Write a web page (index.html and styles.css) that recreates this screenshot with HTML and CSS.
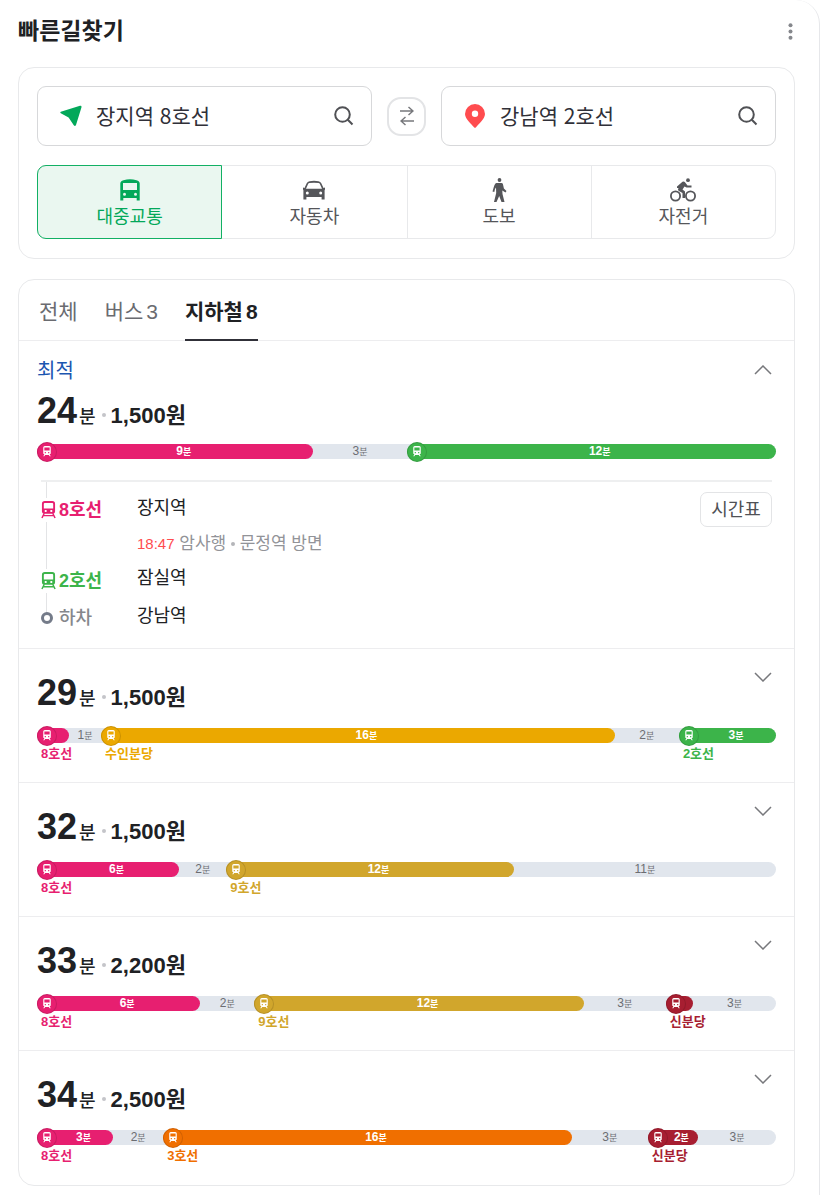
FILE: index.html
```html
<!DOCTYPE html>
<html lang="ko">
<head>
<meta charset="utf-8">
<meta name="viewport" content="width=device-width, initial-scale=1">
<title>빠른길찾기</title>
<link rel="stylesheet" href="styles.css">
</head>
<body>
<svg class="sprite" aria-hidden="true">
  <defs>
    <path id="train" fill-rule="evenodd" d="M3 0h6q2 0 2 2v7.500q0 1-1.500 1.500L11 13.500H9.500L8.500 12h-5L2.500 13.500H1L2.500 11Q1 10.500 1 9.500V2q0-2 2-2zM2.500 2v4h7V2zM3 8v1.500h1.500V8zM7.500 8v1.500H9V8z"/>
    <g id="rail"><path fill-rule="evenodd" d="M4 0h8q3 0 3 3v8q0 2-2 2.500H3Q1 13 1 11V3q0-3 3-3zM3 3Q3 2 4 2h8q1 0 1 1v5H3zM4 9.500v2h2v-2zM10 9.500v2h2v-2z"/><path d="M3.500 13 1 18M12.500 13 15 18M2.500 15.500h11" fill="none" stroke="currentColor" stroke-width="1.600"/></g>
  </defs>
  <symbol id="search" viewBox="0 0 20 20"><circle cx="8.500" cy="8.500" r="7.300"/><path d="m13.800 13.800 4.700 4.700"/></symbol>
  <symbol id="down" viewBox="0 0 18 10"><path d="m1 1 8 8 8-8"/></symbol>
  <symbol id="up" viewBox="0 0 18 10"><path d="m1 9 8-8 8 8"/></symbol>
</svg>
<main class="panel">
  <header class="panel-head">
    <h1 class="title">빠른길찾기</h1>
    <button class="more" type="button" aria-label="더보기"><svg width="5" height="17" viewBox="0 0 5 17"><circle cx="2.500" cy="2.300" r="2"/><circle cx="2.500" cy="8.500" r="2"/><circle cx="2.500" cy="14.700" r="2"/></svg></button>
  </header>

  <section class="card finder">
    <form class="places">
      <div class="place">
        <svg class="place-icon" viewBox="0 0 22 22"><path d="M.800 6.800 20 .800q1.800-.400 1.500 1.400L16 20q-.900 2-2.200.300L8.600 12.500.800 8.300Q-.400 7.400.800 6.800z" fill="#03a85a"/></svg>
        <input class="place-input" type="text" aria-label="출발지" value="장지역 8호선">
        <button class="search" type="button" aria-label="출발지 검색"><svg class="line-icon" width="20" height="20"><use href="#search"/></svg></button>
      </div>
      <button class="swap" type="button" aria-label="출발지 도착지 바꾸기"><svg width="14" height="20" viewBox="0 0 14 20"><path d="M0 5h13M8.500 1 13 5 8.500 9M14 15H1M5.500 11 1 15l4.500 4"/></svg></button>
      <div class="place">
        <svg class="place-icon" viewBox="0 0 22 24"><path fill-rule="evenodd" d="M11 0a10 10 0 0 1 10 10c0 5-6.500 10-9 13.300q-1 1-2 0C7.500 20 1 15 1 10A10 10 0 0 1 11 0zm0 6.500a3.200 3.200 0 1 0 0 6.400 3.200 3.200 0 0 0 0-6.400z" fill="#ff4c4f"/></svg>
        <input class="place-input" type="text" aria-label="도착지" value="강남역 2호선">
        <button class="search" type="button" aria-label="도착지 검색"><svg class="line-icon" width="20" height="20"><use href="#search"/></svg></button>
      </div>
    </form>
    <div class="modes">
      <button class="mode is-on" type="button"><svg width="26" height="24" viewBox="0 0 26 24"><path fill-rule="evenodd" d="M6.500 2.200Q13 .200 19.500 2.200 22.700 3 22.700 5.500V22.500h-3V20H6.300v2.500h-3V5.500Q3.300 3 6.500 2.200zM6 5v7h14V5zM7.500 14.800a1.500 1.500 0 1 0 0 3 1.500 1.500 0 0 0 0-3zm11 0a1.500 1.500 0 1 0 0 3 1.500 1.500 0 0 0 0-3z"/></svg>대중교통</button>
      <button class="mode" type="button"><svg width="26" height="24" viewBox="0 0 26 24"><path fill-rule="evenodd" d="M8.500 3.200Q13 2.500 17.500 3.200q2 .300 2.800 2L22.500 10l1.500-.500v2l-.400.700v9.300h-3V19H5.400v2.500h-3v-9.300L2 11.500v-2l1.500.5 2.200-4.800Q6.500 3.500 8.500 3.200zM8.500 5q-1 .100-1.400 1L5 10.700h16L18.900 6q-.400-.900-1.400-1Q13 4.500 8.500 5zM6.300 13.500a1.500 1.500 0 1 0 0 3 1.500 1.500 0 0 0 0-3zm13.400 0a1.500 1.500 0 1 0 0 3 1.500 1.500 0 0 0 0-3z"/></svg>자동차</button>
      <button class="mode" type="button"><svg width="26" height="24" viewBox="0 0 26 24"><circle cx="13.500" cy="2" r="1.900"/><path d="M10.500 5h5q1 0 1.400 1l1 4.500 2.600 2.500-1 1.500-3.200-2 .2 3.500L18.500 24h-3L13.200 18l-2.700 6H8l2.200-9L10 9.500l-1 1.500-.700 3-1.800-.500L7.800 9Q9 5 10.500 5z"/></svg>도보</button>
      <button class="mode" type="button"><svg width="26" height="24" viewBox="0 0 26 24"><g fill="none" stroke="currentColor" stroke-width="1.800"><circle cx="5.500" cy="18" r="4.600"/><circle cx="20.500" cy="18" r="4.600"/></g><circle cx="18" cy="2.200" r="1.900"/><path d="M12.500 3.800q1.500-.800 2.500.4L17.500 7.500h4v2h-5L14.500 8.500l-2 3 2.500 2V20h-2.500v-5l-4-2.300Q7.500 11.500 8.500 10H7V8.500z"/></svg>자전거</button>
    </div>
  </section>

  <section class="card results">
    <nav class="tabs">
      <a class="tab" href="#all">전체</a>
      <a class="tab" href="#bus">버스<span>3</span></a>
      <a class="tab is-on" href="#subway">지하철<span>8</span></a>
    </nav>

    <article class="route is-open">
      <button class="toggle" type="button" aria-label="접기"><svg class="line-icon thin" width="18" height="10"><use href="#up"/></svg></button>
      <p class="best">최적</p>
      <p class="summary"><strong class="mins">24</strong><span class="unit">분</span><i class="dot"></i><span class="fare">1,500원</span></p>
      <ol class="bar">
        <li class="seg pink" style="--w:276"><span class="track"><span class="fill">9<small>분</small></span></span><svg class="badge" viewBox="-6 -4 24 24"><use href="#train"/></svg></li>
        <li class="seg" style="--w:93"><span class="track">3<small>분</small></span></li>
        <li class="seg green" style="--w:369"><span class="track"><span class="fill">12<small>분</small></span></span><svg class="badge" viewBox="-6 -4 24 24"><use href="#train"/></svg></li>
      </ol>
      <div class="detail">
        <ol class="steps">
          <li class="step pink"><span class="line"><svg class="rail" viewBox="0 0 16 19"><use href="#rail"/></svg>8호선</span><span class="station">장지역</span></li>
          <li class="step note"><span class="info"><time class="time">18:47</time> 암사행 <i class="mini-dot"></i> 문정역 방면</span></li>
          <li class="step green"><span class="line"><svg class="rail" viewBox="0 0 16 19"><use href="#rail"/></svg>2호선</span><span class="station">잠실역</span></li>
          <li class="step last"><span class="line off"><i class="ring"></i>하차</span><span class="station">강남역</span></li>
        </ol>
        <button class="timetable" type="button">시간표</button>
      </div>
    </article>

    <article class="route">
      <button class="toggle" type="button" aria-label="펼치기"><svg class="line-icon thin" width="18" height="10"><use href="#down"/></svg></button>
      <p class="summary"><strong class="mins">29</strong><span class="unit">분</span><i class="dot"></i><span class="fare">1,500원</span></p>
      <ol class="bar">
        <li class="seg pink" style="--w:32"><span class="track"><span class="fill"></span></span><span class="name">8호선</span><svg class="badge" viewBox="-6 -4 24 24"><use href="#train"/></svg></li>
        <li class="seg" style="--w:32"><span class="track">1<small>분</small></span></li>
        <li class="seg yellow" style="--w:513"><span class="track"><span class="fill">16<small>분</small></span></span><span class="name">수인분당</span><svg class="badge" viewBox="-6 -4 24 24"><use href="#train"/></svg></li>
        <li class="seg" style="--w:64"><span class="track">2<small>분</small></span></li>
        <li class="seg green" style="--w:97"><span class="track"><span class="fill">3<small>분</small></span></span><span class="name">2호선</span><svg class="badge" viewBox="-6 -4 24 24"><use href="#train"/></svg></li>
      </ol>
    </article>

    <article class="route">
      <button class="toggle" type="button" aria-label="펼치기"><svg class="line-icon thin" width="18" height="10"><use href="#down"/></svg></button>
      <p class="summary"><strong class="mins">32</strong><span class="unit">분</span><i class="dot"></i><span class="fare">1,500원</span></p>
      <ol class="bar">
        <li class="seg pink" style="--w:142"><span class="track"><span class="fill">6<small>분</small></span></span><span class="name">8호선</span><svg class="badge" viewBox="-6 -4 24 24"><use href="#train"/></svg></li>
        <li class="seg" style="--w:47"><span class="track">2<small>분</small></span></li>
        <li class="seg gold" style="--w:287"><span class="track"><span class="fill">12<small>분</small></span></span><span class="name">9호선</span><svg class="badge" viewBox="-6 -4 24 24"><use href="#train"/></svg></li>
        <li class="seg" style="--w:262"><span class="track">11<small>분</small></span></li>
      </ol>
    </article>

    <article class="route">
      <button class="toggle" type="button" aria-label="펼치기"><svg class="line-icon thin" width="18" height="10"><use href="#down"/></svg></button>
      <p class="summary"><strong class="mins">33</strong><span class="unit">분</span><i class="dot"></i><span class="fare">2,200원</span></p>
      <ol class="bar">
        <li class="seg pink" style="--w:163"><span class="track"><span class="fill">6<small>분</small></span></span><span class="name">8호선</span><svg class="badge" viewBox="-6 -4 24 24"><use href="#train"/></svg></li>
        <li class="seg" style="--w:54"><span class="track">2<small>분</small></span></li>
        <li class="seg gold" style="--w:329"><span class="track"><span class="fill">12<small>분</small></span></span><span class="name">9호선</span><svg class="badge" viewBox="-6 -4 24 24"><use href="#train"/></svg></li>
        <li class="seg" style="--w:82"><span class="track">3<small>분</small></span></li>
        <li class="seg red" style="--w:27"><span class="track"><span class="fill"></span></span><span class="name">신분당</span><svg class="badge" viewBox="-6 -4 24 24"><use href="#train"/></svg></li>
        <li class="seg" style="--w:83"><span class="track">3<small>분</small></span></li>
      </ol>
    </article>

    <article class="route">
      <button class="toggle" type="button" aria-label="펼치기"><svg class="line-icon thin" width="18" height="10"><use href="#down"/></svg></button>
      <p class="summary"><strong class="mins">34</strong><span class="unit">분</span><i class="dot"></i><span class="fare">2,500원</span></p>
      <ol class="bar">
        <li class="seg pink" style="--w:76"><span class="track"><span class="fill">3<small>분</small></span></span><span class="name">8호선</span><svg class="badge" viewBox="-6 -4 24 24"><use href="#train"/></svg></li>
        <li class="seg" style="--w:50"><span class="track">2<small>분</small></span></li>
        <li class="seg orange" style="--w:408"><span class="track"><span class="fill">16<small>분</small></span></span><span class="name">3호선</span><svg class="badge" viewBox="-6 -4 24 24"><use href="#train"/></svg></li>
        <li class="seg" style="--w:76"><span class="track">3<small>분</small></span></li>
        <li class="seg red" style="--w:50"><span class="track"><span class="fill">2<small>분</small></span></span><span class="name">신분당</span><svg class="badge" viewBox="-6 -4 24 24"><use href="#train"/></svg></li>
        <li class="seg" style="--w:78"><span class="track">3<small>분</small></span></li>
      </ol>
    </article>
  </section>
</main>
</body>
</html>
```
FILE: styles.css
```css
* { box-sizing: border-box; }
body {
  margin: 0;
  background: #fff;
  color: #202124;
  font-family: "Liberation Sans", "Noto Sans CJK KR", sans-serif;
}
h1, p, ol { margin: 0; padding: 0; }
ol { list-style: none; }
button { font: inherit; color: inherit; padding: 0; border: 0; background: none; cursor: pointer; }
a { color: inherit; text-decoration: none; }
.sprite { position: absolute; width: 0; height: 0; }

.panel {
  margin-right: 7px;
  padding: 0 24px 9px 18px;
  border-right: 1px solid #e6e7ea;
  border-top-right-radius: 24px;
}
.panel-head { display: flex; justify-content: space-between; align-items: center; height: 67px; padding: 0 2px 10px 0; }
.title { font-size: 23px; line-height: 36px; font-weight: 700; font-family: "Noto Sans CJK KR", sans-serif; }
.more { display: flex; padding: 6px 0 0; }
.more svg { fill: #85878c; }

.card { border: 1px solid #e8e9eb; border-radius: 16px; }
.finder { padding: 18px 18px 19px; margin-bottom: 20px; }
.places { display: flex; align-items: center; gap: 15px; margin-bottom: 19px; }
.place {
  flex: 1;
  min-width: 0;
  display: flex;
  align-items: center;
  height: 60px;
  padding: 0 17px 0 21px;
  border: 1px solid #d7d8da;
  border-radius: 9px;
}
.place-icon { flex: none; width: 24px; height: 24px; margin-right: 13px; }
.place:first-child .place-icon { height: 22px; }
.place-input {
  flex: 1;
  min-width: 0;
  height: 40px;
  padding: 0 0 2px;
  border: 0;
  background: none;
  color: #303038;
  font: 21px "Noto Sans CJK KR", sans-serif;
}
.search { display: flex; }
.line-icon { fill: none; stroke: #505155; stroke-width: 2; }
.line-icon.thin { stroke: #77787c; stroke-width: 1.5; }
.swap { display: grid; place-items: center; flex: none; width: 39px; height: 39px; border: 2px solid #e3e4e6; border-radius: 14px; }
.swap svg { fill: none; stroke: #77787c; stroke-width: 1.5; }

.modes { display: grid; grid-template-columns: repeat(4, 1fr); border: 1px solid #e8e9eb; border-radius: 9px; }
.mode {
  display: flex;
  flex-direction: column;
  align-items: center;
  height: 72px;
  padding-top: 12px;
  border-left: 1px solid #e8e9eb;
  color: #55565a;
  font-size: 18px;
  line-height: 30px;
}
.mode svg { fill: currentColor; }
.mode.is-on { height: 74px; margin: -1px 0 -1px -1px; border: 1px solid #12b064; border-radius: 9px 0 0 9px; background: #eaf7f0; color: #03a85a; }
.mode.is-on + .mode { border-left: 0; }

.tabs { display: flex; gap: 27px; height: 61px; padding: 0 20px; border-bottom: 1px solid #ededef; }
.tab { display: flex; gap: 3px; margin-bottom: -1px; padding-top: 17px; font-size: 21px; line-height: 30px; color: #6a6b70; }
.tab.is-on { border-bottom: 2px solid #303038; color: #202124; font-weight: 700; }

.route { position: relative; padding: 20px 18px 18px; border-bottom: 1px solid #ededef; }
.route:last-child { padding-bottom: 19px; border-bottom: 0; }
.route.is-open { padding-top: 15px; padding-bottom: 13px; }
.toggle { position: absolute; top: 23px; right: 22px; display: flex; }
.is-open .toggle { top: 24px; }
.best { color: #1c56b0; font-size: 20px; line-height: 31px; }
.summary { display: flex; align-items: baseline; height: 48px; line-height: 48px; }
.mins { font-size: 36px; }
.unit { margin-left: 2px; font-size: 18px; font-weight: 500; }
.dot { align-self: center; width: 4px; height: 4px; margin: 8px 5px 0 6px; border-radius: 50%; background: #c4c5c9; }
.fare { font-size: 22px; font-weight: 700; }

.bar { display: flex; margin-top: 11px; }
.is-open .bar { margin-top: 9px; }
.seg { position: relative; display: flex; flex-direction: column; flex: var(--w) 1 0; min-width: 0; }
.track {
  display: block;
  height: 15px;
  background: #e1e6ed;
  color: #6b6d72;
  font-size: 12px;
  line-height: 15px;
  text-align: center;
  white-space: nowrap;
}
.track small { font-size: 9px; }
.seg:first-child .track { border-radius: 8px 0 0 8px; }
.seg:last-child .track { border-radius: 0 8px 8px 0; }
.fill { display: block; height: 15px; padding-left: 17px; border-radius: 8px; background: var(--line); color: #fff; font-weight: 700; }
.name { margin-left: 4px; color: var(--line); font-size: 13px; line-height: 21px; height: 21px; font-weight: 700; white-space: nowrap; }
.badge {
  position: absolute;
  top: -2px;
  left: 0;
  width: 20px;
  height: 20px;
  border: 1px solid rgba(0, 0, 0, 0.13);
  border-radius: 50%;
  background: var(--line);
  fill: #fff;
}
.pink { --line: #e71f70; }
.green { --line: #3cb44a; }
.yellow { --line: #eba800; }
.gold { --line: #d1a62c; }
.red { --line: #a71e31; }
.orange { --line: #f06f00; }

.detail { display: flex; align-items: flex-start; margin: 21px 4px 0; padding-top: 10px; border-top: 2px solid #eeeff0; }
.steps { position: relative; flex: 1; }
.steps::before { content: ""; position: absolute; left: 5px; top: -10px; bottom: 20px; width: 1px; background: #e3e4e6; }
.step { display: grid; grid-template-columns: 96px 1fr; height: 35px; line-height: 34px; font-size: 18px; }
.step.green { height: 38px; }
.line { position: relative; display: flex; align-items: center; gap: 3px; color: var(--line); font-weight: 700; }
.rail { width: 15px; height: 18px; fill: currentColor; background: #fff; outline: 3px solid #fff; }
.station { line-height: 32px; }
.line.off { gap: 6px; color: #85878c; font-weight: 500; }
.ring { width: 12px; height: 12px; border: 3px solid #747b89; border-radius: 50%; background: #fff; }
.info { grid-column: 2; color: #929398; font-size: 17px; white-space: nowrap; }
.time { color: #ff4c4f; font-size: 15px; }
.mini-dot { display: inline-block; width: 4px; height: 4px; border-radius: 50%; background: #b4b5b9; vertical-align: 3px; }
.timetable { width: 72px; height: 35px; border: 1px solid #e3e4e6; border-radius: 7px; color: #505155; font-size: 18px; line-height: 30px; }
```
